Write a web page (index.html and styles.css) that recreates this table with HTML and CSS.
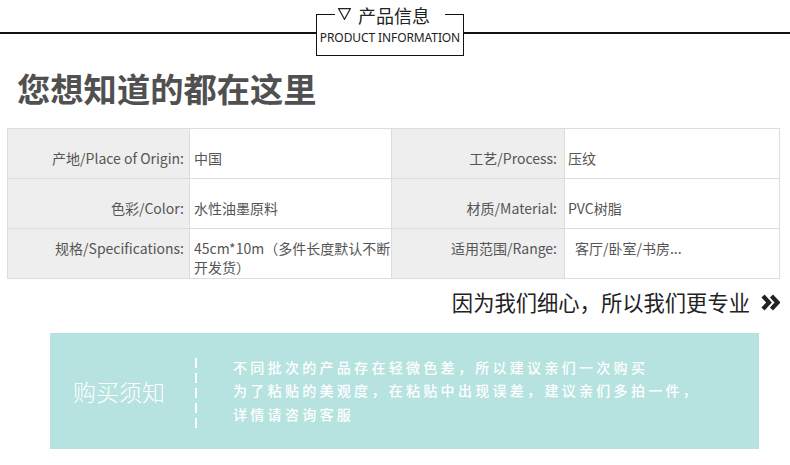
FILE: index.html
```html
<!DOCTYPE html>
<html lang="zh-CN">
<head>
    <meta charset="UTF-8" />
    <meta name="viewport" content="width=device-width, initial-scale=1.0" />
    <title>产品信息</title>
    <link rel="stylesheet" href="styles.css">
</head>
<body>
    <div class="page">
        <header class="section-title">
            <span class="rule rule-left"></span>
            <div class="title-box">
                <div class="title-cn">
                    <svg class="tri" width="13" height="12" viewBox="0 0 13 12"><polygon points="0.7,0.7 12.3,0.7 6.5,11.3" fill="none" stroke="#222" stroke-width="1.2"/></svg>
                    产品信息
                </div>
                <div class="title-en">PRODUCT INFORMATION</div>
            </div>
            <span class="rule"></span>
        </header>

        <h1 class="headline">您想知道的都在这里</h1>

        <table class="spec-table">
            <colgroup>
                <col class="c-label1">
                <col class="c-value1">
                <col class="c-label2">
                <col class="c-value2">
            </colgroup>
            <tr>
                <td class="label">产地/Place of Origin:</td>
                <td class="value">中国</td>
                <td class="label label-r">工艺/Process:</td>
                <td class="value value-r">压纹</td>
            </tr>
            <tr>
                <td class="label">色彩/Color:</td>
                <td class="value">水性油墨原料</td>
                <td class="label label-r">材质/Material:</td>
                <td class="value value-r">PVC树脂</td>
            </tr>
            <tr class="row-tall">
                <td class="label">规格/Specifications:</td>
                <td class="value">45cm*10m（多件长度默认不断开发货）</td>
                <td class="label label-r">适用范围/Range:</td>
                <td class="value value-r range">客厅/卧室/书房...</td>
            </tr>
        </table>

        <p class="slogan">
            因为我们细心，所以我们更专业
            <svg class="chevrons" width="19" height="17" viewBox="0 0 19 17"><polyline points="2,2 8,8.5 2,15" fill="none" stroke="#222" stroke-width="4.2"/><polyline points="10.5,2 16.5,8.5 10.5,15" fill="none" stroke="#222" stroke-width="4.2"/></svg>
        </p>

        <div class="notice">
            <div class="notice-title">购买须知</div>
            <div class="notice-divider"></div>
            <div class="notice-text">
                <p>不同批次的产品存在轻微色差，所以建议亲们一次购买</p>
                <p>为了粘贴的美观度，在粘贴中出现误差，建议亲们多拍一件，</p>
                <p>详情请咨询客服</p>
            </div>
        </div>
    </div>
</body>
</html>
```

FILE: styles.css
```css
body {
    margin: 0;
    background: #fff;
    font-family: "Noto Sans CJK SC", "Noto Sans", sans-serif;
    color: #555;
}

.page {
    width: 790px;
    height: 465px;
    overflow: hidden;
}

/* header title with rules */
.section-title {
    display: flex;
    align-items: flex-start;
    padding-top: 14px;
}

.rule {
    flex: 1;
    height: 2px;
    margin-top: 18px;
    background: #111;
}

.rule-left {
    flex: 0 0 316px;
}

.title-box {
    position: relative;
    width: 148px;
    height: 42px;
    box-sizing: border-box;
    border: 1px solid #111;
    display: flex;
    align-items: center;
    justify-content: center;
    padding-top: 5px;
}

.title-cn {
    position: absolute;
    top: -10px;
    left: 50%;
    transform: translateX(-50%);
    display: flex;
    align-items: center;
    padding: 0 15px 0 3px;
    background: #fff;
    font-size: 18px;
    line-height: 20px;
    color: #222;
    white-space: nowrap;
}

.tri {
    margin-right: 7px;
    margin-top: -3px;
}

.title-en {
    font-family: "Noto Sans", sans-serif;
    font-size: 12px;
    color: #222;
    letter-spacing: -0.1px;
    white-space: nowrap;
}

.headline {
    margin: 12px 0 0;
    padding-left: 17px;
    font-size: 33.3px;
    line-height: 40px;
    font-weight: 700;
    color: #505050;
}

/* spec table */
.spec-table {
    margin: 20px 0 0 7px;
    width: 772px;
    border-collapse: collapse;
    table-layout: fixed;
    font-size: 14px;
    color: #555;
}

.c-label1 { width: 182px; }
.c-value1 { width: 202px; }
.c-label2 { width: 173px; }
.c-value2 { width: 215px; }

.spec-table td {
    height: 40px;
    border: 1px solid #ddd;
    padding: 9px 0 0;
    vertical-align: middle;
    line-height: 19px;
}

.spec-table .label {
    background: #eeeeee;
    text-align: right;
    padding-right: 5px;
    white-space: nowrap;
}

.spec-table .label-r {
    padding-right: 7px;
}

.spec-table .value {
    background: #fff;
    padding-left: 4px;
    padding-right: 0;
}

.spec-table .value-r {
    padding-left: 3px;
}

.spec-table .range {
    padding-left: 10px;
}

.row-tall td {
    vertical-align: top;
    padding-top: 10px;
    height: 39px;
}

/* slogan */
.slogan {
    margin: 8px 0 0;
    display: flex;
    align-items: center;
    justify-content: flex-end;
    padding-right: 10px;
    font-size: 21.3px;
    line-height: 30px;
    color: #222;
}

.chevrons {
    margin-left: 11px;
}

/* purchase notice */
.notice {
    margin: 16px 31px 0 50px;
    height: 116px;
    background: #b6e3e0;
    display: flex;
    align-items: center;
    color: #fff;
}

.notice-title {
    margin-left: 23px;
    font-size: 23px;
    font-weight: 300;
    line-height: 30px;
    white-space: nowrap;
}

.notice-divider {
    width: 2px;
    height: 77px;
    margin-left: 30px;
    margin-top: 3px;
    background: repeating-linear-gradient(to bottom, transparent 0, transparent 4px, #fff 4px, #fff 14px, transparent 14px, transparent 15px);
}

.notice-text {
    margin-left: 36px;
    font-size: 14px;
    font-weight: 500;
    letter-spacing: 3.3px;
    line-height: 23.5px;
}

.notice-text p {
    margin: 0;
    white-space: nowrap;
}
```
